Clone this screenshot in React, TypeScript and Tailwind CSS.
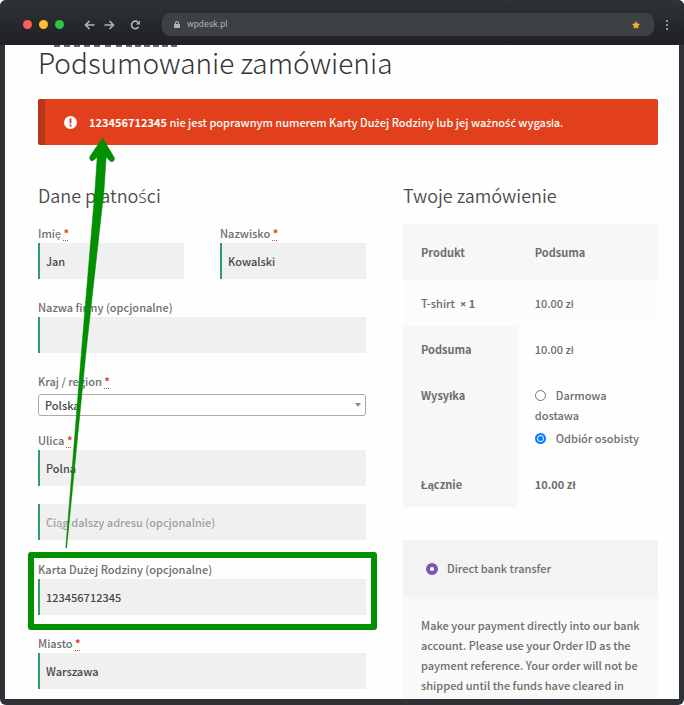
import React from 'react';
import { FaLock, FaStar } from 'react-icons/fa';

const inputClass =
  'block w-full h-9 bg-[#f0f0f0] border-l-2 border-[#2f9e6b] pl-1.5 pr-2 text-[11px] font-medium text-[#484848] placeholder:text-[#a0a0a0] outline-none';

const paymentText =
  'Make your payment directly into our bank account. Please use your Order ID as the payment reference. Your order will not be shipped until the funds have cleared in our account.';

const Pl = ({ children }: { children: string }) => (
  <>
    {children.split(/([żśćń×])/).map((part, index) =>
      index % 2 ? (
        <span key={index} className="font-['Noto_Sans',sans-serif] leading-none">
          {part}
        </span>
      ) : (
        part
      )
    )}
  </>
);

const Required = () => (
  <abbr
    title="wymagane"
    className="font-bold text-[#e2401c] underline decoration-dotted decoration-1 decoration-[#e2401c] underline-offset-2"
  >
    *
  </abbr>
);

type FieldProps = {
  id: string;
  label: string;
  value: string;
  required?: boolean;
};

const Field = ({ id, label, value, required }: FieldProps) => (
  <div className="min-w-0">
    <label htmlFor={id} className="block h-5 leading-5 whitespace-nowrap">
      <Pl>{label}</Pl> {required && <Required />}
    </label>
    <input id={id} type="text" defaultValue={value} className={inputClass} />
  </div>
);

const BrowserBar = () => (
  <header className="flex items-center h-[45px] shrink-0 pl-[23px] pr-4 pt-1 bg-linear-to-b from-[#2f3336] to-[#1f2124]">
    <div className="flex gap-[7px]">
      <span className="w-[9px] h-[9px] rounded-full bg-[#ff5f57]" />
      <span className="w-[9px] h-[9px] rounded-full bg-[#febc2e]" />
      <span className="w-[9px] h-[9px] rounded-full bg-[#28c840]" />
    </div>
    <div className="flex items-center gap-[9px] ml-5 text-[#b4b6b8]">
      <button type="button" aria-label="Wstecz" className="block">
        <svg width="11" height="10" viewBox="0 0 11 10" fill="none" stroke="currentColor" strokeWidth="1.6">
          <path d="M10.5 5H1.5M5.5 1L1.5 5l4 4" />
        </svg>
      </button>
      <button type="button" aria-label="Dalej" className="block">
        <svg width="11" height="10" viewBox="0 0 11 10" fill="none" stroke="currentColor" strokeWidth="1.6">
          <path d="M0.5 5h9M5.5 1l4 4-4 4" />
        </svg>
      </button>
      <button type="button" aria-label="Odśwież" className="block ml-1.5">
        <svg width="11" height="10" viewBox="0 0 11 10" fill="none" stroke="currentColor" strokeWidth="1.6">
          <path d="M8.5 7A3.8 3.8 0 1 1 8 2.2" />
          <path d="M9.9 0.4V4.4H5.9z" fill="currentColor" stroke="none" />
        </svg>
      </button>
    </div>
    <div className="flex flex-1 items-center h-[23px] ml-[21px] px-3 rounded-lg bg-[#3d4144]">
      <FaLock className="w-[6px] h-[7px] text-[#b4b6b8]" />
      <span className="ml-[7px] flex-1 font-['Roboto',sans-serif] text-[9px] text-[#aeb1b3]">wpdesk.pl</span>
      <FaStar className="w-2 h-2 mr-0.5 text-[#fbab2c]" />
    </div>
    <button type="button" aria-label="Menu" className="flex flex-col gap-[2px] ml-3">
      <span className="w-[2px] h-[2px] bg-[#94979a]" />
      <span className="w-[2px] h-[2px] bg-[#94979a]" />
      <span className="w-[2px] h-[2px] bg-[#94979a]" />
    </button>
  </header>
);

const BillingForm = () => (
  <form>
    <h2 className="mb-[14px] text-[18px] leading-7 font-[350] text-[#4c4c4c]">
      <Pl>Dane płatności</Pl>
    </h2>
    <div className="grid grid-cols-2 gap-9 mb-[18px]">
      <Field id="first-name" label="Imię" value="Jan" required />
      <Field id="last-name" label="Nazwisko" value="Kowalski" required />
    </div>
    <div className="mb-[18px]">
      <Field id="company" label="Nazwa firmy (opcjonalne)" value="" />
    </div>
    <div className="mb-[14px]">
      <label htmlFor="country" className="block h-5 leading-5">
        Kraj / region <Required />
      </label>
      <div className="relative mt-[3px]">
        <select
          id="country"
          defaultValue="Polska"
          className="block appearance-none w-full h-[22px] pl-1.5 rounded-[3px] border border-[#aaa] bg-white text-[11px] leading-5 font-medium text-[#444]"
        >
          <option>Polska</option>
        </select>
        <span className="absolute right-[5px] top-[9px] border-x-[3px] border-x-transparent border-t-4 border-t-[#8c8c8c]" />
      </div>
    </div>
    <div className="mb-[18px]">
      <Field id="street" label="Ulica" value="Polna" required />
    </div>
    <div className="mb-[19px]">
      <input
        type="text"
        aria-label="Ciąg dalszy adresu"
        placeholder="Ciąg dalszy adresu (opcjonalnie)"
        className={inputClass}
      />
    </div>
    <div className="relative mb-[18px]">
      <Field id="family-card" label="Karta Dużej Rodziny (opcjonalne)" value="123456712345" />
      <div className="absolute -top-[7px] -bottom-[15px] -left-2.5 -right-[11px] border-6 border-[#009000] rounded-[3px] pointer-events-none" />
    </div>
    <Field id="city" label="Miasto" value="Warszawa" required />
  </form>
);

const OrderSummary = () => (
  <section>
    <h2 className="mb-[15px] text-[18px] leading-7 font-[350] text-[#4c4c4c]">Twoje zamówienie</h2>
    <table className="w-full table-fixed text-left leading-5">
      <thead>
        <tr className="bg-[#f7f7f7]">
          <th className="w-[45%] px-[18px] py-[18px] font-bold">Produkt</th>
          <th className="px-[17px] py-[18px] font-bold">Podsuma</th>
        </tr>
      </thead>
      <tbody className="align-top">
        <tr className="bg-[#fcfcfc]">
          <td className="px-[18px] py-[13px]">
            T-shirt&nbsp; <strong><Pl>× 1</Pl></strong>
          </td>
          <td className="px-[17px] py-[13px]">10.00 zł</td>
        </tr>
        <tr>
          <th className="px-[18px] py-[13px] font-bold bg-[#f7f7f7]">Podsuma</th>
          <td className="px-[17px] py-[13px]">10.00 zł</td>
        </tr>
        <tr>
          <th className="px-[18px] py-[13px] font-bold bg-[#f7f7f7]">Wysyłka</th>
          <td className="px-[17px] py-[13px]">
            <div className="mb-[3px]">
              <input
                id="ship-free"
                type="radio"
                name="shipping"
                className="appearance-none w-[11px] h-[11px] mr-2.5 align-[-1px] rounded-full border border-[#767676] bg-white"
              />
              <label htmlFor="ship-free">Darmowa dostawa</label>
            </div>
            <div className="whitespace-nowrap">
              <input
                id="ship-pickup"
                type="radio"
                name="shipping"
                defaultChecked
                className="appearance-none w-[11px] h-[11px] mr-2.5 align-[-1px] rounded-full border-2 border-[#0a7aff] bg-[#0a7aff] shadow-[inset_0_0_0_1px_#fff]"
              />
              <label htmlFor="ship-pickup">Odbiór osobisty</label>
            </div>
          </td>
        </tr>
        <tr>
          <th className="px-[18px] py-[13px] font-bold bg-[#f7f7f7]">Łącznie</th>
          <td className="px-[17px] py-[13px] font-bold">10.00 zł</td>
        </tr>
      </tbody>
    </table>
    <div className="mt-[33px] bg-[#f9f9f9]">
      <div className="flex items-center h-[57px] pl-[23px] bg-[#f3f3f3]">
        <input
          id="bank-transfer"
          type="radio"
          name="payment"
          defaultChecked
          className="appearance-none w-3 h-3 mr-[9px] rounded-full border-4 border-[#7f54b3] bg-white"
        />
        <label htmlFor="bank-transfer">Direct bank transfer</label>
      </div>
      <p className="pl-[18px] pr-4 py-[18px] leading-5">{paymentText}</p>
    </div>
  </section>
);

const App = () => {
  return (
    <div className="flex flex-col h-screen overflow-hidden rounded-md bg-[#2e3236] font-['Noto_Sans_CJK_SC','Noto_Sans_CJK_JP',sans-serif]">
      <BrowserBar />
      <main className="relative flex-1 min-h-0 overflow-hidden mx-[5px] mb-[6px] pl-[33px] pr-[21px] bg-[#fefefe] text-[11px] font-medium text-[#6d6d6d]">
        {/* bottom edge of the line scrolled under the browser bar */}
        <div aria-hidden="true" className="flex gap-1 h-px ml-4">
          <span className="w-9 border-t-2 border-dashed border-[#666]" />
          <span className="w-7 border-t-2 border-dashed border-[#666]" />
          <span className="w-[51px] border-t-2 border-dashed border-[#666]" />
        </div>
        <h1 className="text-[28px] leading-8 font-light text-[#333] whitespace-nowrap">Podsumowanie zamówienia</h1>
        <div
          role="alert"
          className="flex items-center h-[46px] mt-[21px] pl-[19px] border-l-[7px] border-[#b8341a] rounded-[2px] bg-[#e2401c] text-white"
        >
          <svg width="13" height="13" viewBox="0 0 13 13" className="mr-3 shrink-0">
            <circle cx="6.5" cy="6.5" r="6.5" fill="#fff" />
            <path d="M5.4 2.5h2.2L7.3 7.5H5.7zM5.5 8.6h2v1.9h-2z" fill="#e2401c" />
          </svg>
          <p>
            <strong>123456712345</strong> <Pl>nie jest poprawnym numerem Karty Dużej Rodziny lub jej ważność wygasła.</Pl>
          </p>
        </div>
        <div className="grid grid-cols-[328fr_255fr] gap-[37px] mt-9">
          <BillingForm />
          <OrderSummary />
        </div>
        <svg
          width="56"
          height="414"
          viewBox="60 137 56 414"
          className="absolute left-[55px] top-[92px] pointer-events-none"
        >
          <path
            d="M65.8 548L81.6 350L95 190L97.2 157L94 160Q91.5 162 90 159.5Q89.2 158 90.2 156L102.5 138L114.2 157.5Q115 160 113.2 161.3Q111 162.4 109.5 160.5L106.2 157L104 190L86.2 350L66.6 548Z"
            fill="#009000"
            stroke="#007f00"
            strokeWidth="0.5"
          />
        </svg>
      </main>
    </div>
  );
};

export default App;
